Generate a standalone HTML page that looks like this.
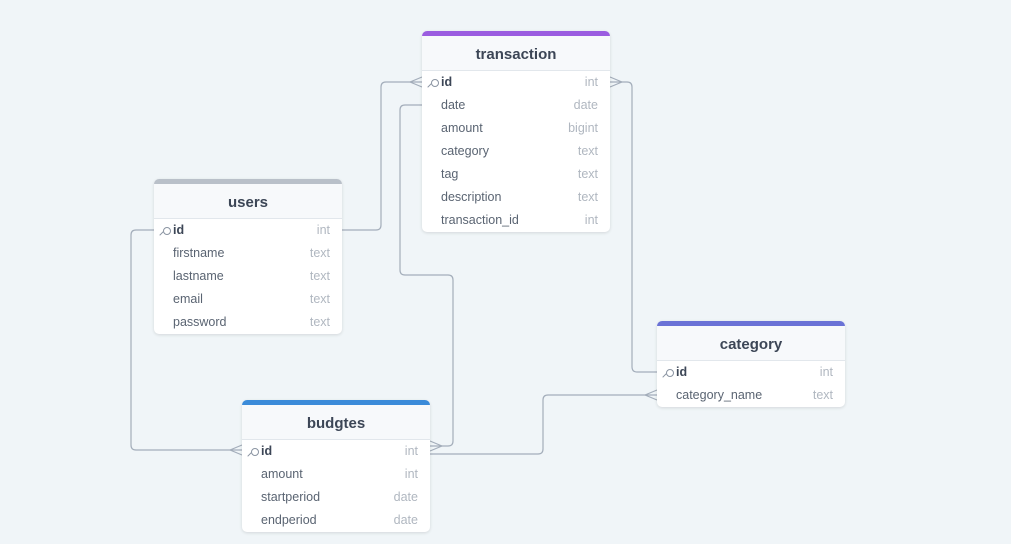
<!DOCTYPE html>
<html><head><style>
*{margin:0;padding:0;box-sizing:border-box}
body{width:1011px;height:544px;background:#f0f5f8;position:relative;overflow:hidden;font-family:"Liberation Sans",sans-serif}
.t{position:absolute;width:188px;background:#fff;border-radius:5px;box-shadow:0 1px 3px rgba(0,0,0,.12);overflow:hidden}
.t .bar{height:5px}
.t .h{height:35px;padding-top:2px;background:#f7f9fb;border-bottom:1px solid #e2e7ec;text-align:center;font-size:15px;font-weight:bold;color:#3c4656;line-height:33px}
.r{height:23px;line-height:23px;font-size:12.5px;color:#5a6472;padding-left:19px;padding-right:12px;position:relative}
.r:first-of-type{margin-top:1px}
.r span{position:absolute;right:12px;color:#b0b7c0;font-weight:normal}
.r.k{font-weight:bold;color:#3c4656}
.r.k:before{content:"";position:absolute;left:9px;top:8px;width:6px;height:6px;border:1.2px solid #8a94a2;border-radius:50%}
.r.k:after{content:"";position:absolute;left:5px;top:14px;width:5px;height:1.2px;background:#8a94a2;transform:rotate(-45deg)}
svg{position:absolute;left:0;top:0}
</style></head><body>
<svg width="1011" height="544" fill="none" stroke="#a3adba" stroke-width="1.2">
<path d="M342 230 H376 Q381 230 381 225 V87 Q381 82 386 82 H422"/>
<path d="M410 82 L422 77 M410 82 L422 87"/>
<path d="M422 105 H405 Q400 105 400 110 V270 Q400 275 405 275 H448 Q453 275 453 280 V441 Q453 446 448 446 H430"/>
<path d="M442 446 L430 441 M442 446 L430 451"/>
<path d="M610 82 H627 Q632 82 632 87 V367 Q632 372 637 372 H657"/>
<path d="M622 82 L610 77 M622 82 L610 87"/>
<path d="M430 454 H538 Q543 454 543 449 V400 Q543 395 548 395 H657"/>
<path d="M645 395 L657 390 M645 395 L657 400"/>
<path d="M154 230 H136 Q131 230 131 235 V445 Q131 450 136 450 H242"/>
<path d="M230 450 L242 445 M230 450 L242 455"/>
</svg>
<div class="t" style="left:422px;top:31px"><div class="bar" style="background:#9b5de0"></div><div class="h">transaction</div>
<div class="r k">id<span>int</span></div><div class="r">date<span>date</span></div><div class="r">amount<span>bigint</span></div><div class="r">category<span>text</span></div><div class="r">tag<span>text</span></div><div class="r">description<span>text</span></div><div class="r">transaction_id<span>int</span></div></div>
<div class="t" style="left:154px;top:179px"><div class="bar" style="background:#b9c0c9"></div><div class="h">users</div>
<div class="r k">id<span>int</span></div><div class="r">firstname<span>text</span></div><div class="r">lastname<span>text</span></div><div class="r">email<span>text</span></div><div class="r">password<span>text</span></div></div>
<div class="t" style="left:657px;top:321px"><div class="bar" style="background:#6a72d6"></div><div class="h">category</div>
<div class="r k">id<span>int</span></div><div class="r">category_name<span>text</span></div></div>
<div class="t" style="left:242px;top:400px"><div class="bar" style="background:#3b8bd9"></div><div class="h">budgtes</div>
<div class="r k">id<span>int</span></div><div class="r">amount<span>int</span></div><div class="r">startperiod<span>date</span></div><div class="r">endperiod<span>date</span></div></div>
</body></html>
